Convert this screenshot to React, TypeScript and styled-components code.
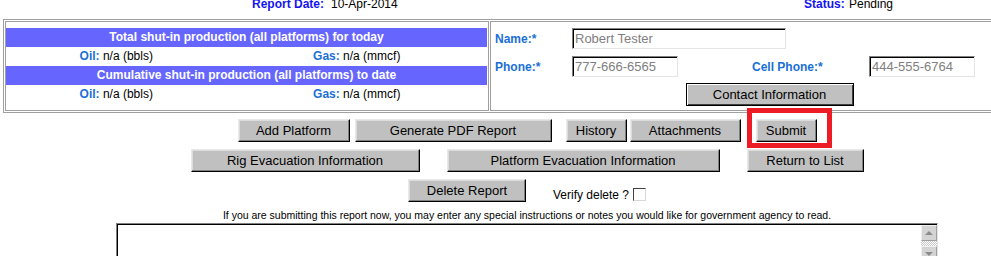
import React from "react";
import styled, { createGlobalStyle } from "styled-components";

const GlobalStyle = createGlobalStyle`
  html, body {
    margin: 0;
    padding: 0;
    background: #fff;
    overflow: hidden;
  }
  body {
    font-family: Arial, "Liberation Sans", sans-serif;
    font-size: 12px;
    color: #000;
  }
`;

const Page = styled.div`
  width: 1054px;
`;

const HeaderRow = styled.div`
  height: 19px;
  padding-left: 252px;
  display: grid;
  grid-template-columns: 79px 473px 45px 1fr;
  line-height: 8px;
  white-space: nowrap;
`;

const HeaderLabel = styled.span`
  font-weight: bold;
  color: #1414f0;
`;

const InfoTable = styled.div`
  margin-left: 3px;
  width: 1048px;
  box-sizing: border-box;
  border: 1px solid #a0a0a0;
  padding: 1px;
  display: flex;
  gap: 1px;
`;

const TotalsCell = styled.div`
  width: 484px;
  box-sizing: border-box;
  border: 1px solid #a0a0a0;
  padding-right: 1px;
  display: flex;
  flex-direction: column;
  justify-content: center;
`;

const ContactCell = styled.div`
  flex: 1;
  box-sizing: border-box;
  border: 1px solid #a0a0a0;
  padding: 6px 4px 4px 4px;
`;

const Bar = styled.div`
  height: 19px;
  line-height: 19px;
  background: #6666ff;
  color: #fff;
  font-weight: bold;
  text-align: center;
`;

const ProdRow = styled.div`
  height: 19px;
  line-height: 19px;
  display: grid;
  grid-template-columns: 1fr 1fr;
`;

const ProdItem = styled.div`
  text-align: center;
  padding-right: 20px;
`;

const FieldLabel = styled.span`
  font-weight: bold;
  color: #1a6fd6;
`;

const FormGrid = styled.div`
  display: grid;
  grid-template-columns: 77px 180px 117px 106px;
  row-gap: 7px;
  align-items: center;
`;

const TextField = styled.input<{ $width: number; $span?: number }>`
  box-sizing: border-box;
  width: ${(p) => p.$width}px;
  height: 21px;
  margin: 0;
  padding: 0 2px;
  font-family: Arial, "Liberation Sans", sans-serif;
  font-size: 13px;
  color: #808080;
  background: #fff;
  border: 1px solid;
  border-color: #808080 #e4e4e4 #e4e4e4 #808080;
  box-shadow: inset 1px 1px #000;
  outline: none;
  ${(p) => (p.$span ? `grid-column: span ${p.$span};` : "")}
`;

const CenterRow = styled.div<{ $top?: number }>`
  display: flex;
  justify-content: center;
  align-items: center;
  margin-top: ${(p) => p.$top ?? 0}px;
`;

const Button = styled.button<{ $width: number; $ml?: number; $default?: boolean }>`
  box-sizing: border-box;
  width: ${(p) => p.$width}px;
  height: 23px;
  margin: 0 0 0 ${(p) => p.$ml ?? 0}px;
  padding: 0;
  font-family: Arial, "Liberation Sans", sans-serif;
  font-size: 13px;
  color: #000;
  background: #c0c0c0;
  border: 1px solid;
  border-color: ${(p) => (p.$default ? "#000" : "#e8e8e8 #000 #000 #e8e8e8")};
  box-shadow: ${(p) =>
    p.$default
      ? "inset 1px 1px #fff, inset -1px -1px #404040"
      : "inset -1px -1px #808080, inset 1px 1px #dcdcdc"};
  cursor: pointer;
`;

const Actions = styled.div`
  margin-top: 6px;
  display: flex;
  flex-direction: column;
  gap: 7px;
`;

const Highlighted = styled.span<{ $ml: number }>`
  position: relative;
  margin-left: ${(p) => p.$ml}px;
  display: inline-flex;
`;

const RedMark = styled.span`
  position: absolute;
  left: -9px;
  top: -11px;
  width: 85px;
  height: 40px;
  box-sizing: border-box;
  border: 5px solid #ed1c24;
  pointer-events: none;
`;

const VerifyText = styled.span<{ $ml: number }>`
  margin-left: ${(p) => p.$ml}px;
  margin-top: 8px;
  display: inline-flex;
  align-items: center;
  gap: 4px;
`;

const CheckBox = styled.span`
  width: 13px;
  height: 13px;
  box-sizing: border-box;
  background: #fff;
  border: 1px solid;
  border-color: #404040 #d8d8d8 #d8d8d8 #404040;
`;

const Note = styled.div`
  margin-top: 6px;
  height: 15px;
  line-height: 14px;
  font-size: 10.5px;
  text-align: center;
  white-space: nowrap;
  color: #000;
`;

const NotesBox = styled.div`
  margin: 0 auto;
  width: 822px;
  height: 40px;
  box-sizing: border-box;
  display: flex;
  border: 1px solid;
  border-color: #808080 #e4e4e4 #e4e4e4 #808080;
  box-shadow: inset 1px 1px #000;
  padding: 1px 0 0 1px;
`;

const NotesArea = styled.textarea`
  flex: 1;
  border: none;
  resize: none;
  outline: none;
  margin: 0;
  padding: 2px;
  font-family: Arial, "Liberation Sans", sans-serif;
  font-size: 13px;
`;

const ScrollBar = styled.div`
  width: 16px;
  display: flex;
  flex-direction: column;
`;

const ScrollTrack = styled.div`
  flex: 1;
  background: repeating-conic-gradient(#c8c8c8 0 25%, #fff 0 50%) 0 0 / 2px 2px;
`;

const ScrollButton = styled.div<{ $down?: boolean }>`
  height: 16px;
  box-sizing: border-box;
  background: #d4d4d4;
  border: 1px solid;
  border-color: #f0f0f0 #a0a0a0 #a0a0a0 #f0f0f0;
  display: flex;
  align-items: center;
  justify-content: center;

  &::after {
    content: "";
    width: 0;
    height: 0;
    border-left: 4px solid transparent;
    border-right: 4px solid transparent;
    ${(p) =>
      p.$down
        ? "border-top: 4px solid #8c8c8c;"
        : "border-bottom: 4px solid #8c8c8c;"}
  }
`;

export default function App(): JSX.Element {
  return (
    <Page>
      <GlobalStyle />
      <HeaderRow>
        <HeaderLabel>Report Date:</HeaderLabel>
        <span>10-Apr-2014</span>
        <HeaderLabel>Status:</HeaderLabel>
        <span>Pending</span>
      </HeaderRow>

      <InfoTable>
        <TotalsCell>
          <Bar>Total shut-in production (all platforms) for today</Bar>
          <ProdRow>
            <ProdItem>
              <FieldLabel>Oil:</FieldLabel> n/a (bbls)
            </ProdItem>
            <ProdItem>
              <FieldLabel>Gas:</FieldLabel> n/a (mmcf)
            </ProdItem>
          </ProdRow>
          <Bar>Cumulative shut-in production (all platforms) to date</Bar>
          <ProdRow>
            <ProdItem>
              <FieldLabel>Oil:</FieldLabel> n/a (bbls)
            </ProdItem>
            <ProdItem>
              <FieldLabel>Gas:</FieldLabel> n/a (mmcf)
            </ProdItem>
          </ProdRow>
        </TotalsCell>

        <ContactCell>
          <FormGrid>
            <FieldLabel>Name:*</FieldLabel>
            <TextField $width={214} $span={3} readOnly value="Robert Tester" />
            <FieldLabel>Phone:*</FieldLabel>
            <TextField $width={106} readOnly value="777-666-6565" />
            <FieldLabel>Cell Phone:*</FieldLabel>
            <TextField $width={106} readOnly value="444-555-6764" />
          </FormGrid>
          <CenterRow $top={6}>
            <Button $width={168} $default>
              Contact Information
            </Button>
          </CenterRow>
        </ContactCell>
      </InfoTable>

      <Actions>
        <CenterRow>
          <Button $width={112}>Add Platform</Button>
          <Button $width={197} $ml={5}>
            Generate PDF Report
          </Button>
          <Button $width={61} $ml={14}>
            History
          </Button>
          <Button $width={111} $ml={3}>
            Attachments
          </Button>
          <Highlighted $ml={15}>
            <Button $width={61}>Submit</Button>
            <RedMark />
          </Highlighted>
        </CenterRow>
        <CenterRow>
          <Button $width={229}>Rig Evacuation Information</Button>
          <Button $width={273} $ml={27}>
            Platform Evacuation Information
          </Button>
          <Button $width={117} $ml={27}>
            Return to List
          </Button>
        </CenterRow>
        <CenterRow>
          <Button $width={118}>Delete Report</Button>
          <VerifyText $ml={27}>
            Verify delete ?
            <CheckBox />
          </VerifyText>
        </CenterRow>
      </Actions>

      <Note>
        If you are submitting this report now, you may enter any special instructions or notes you
        would like for government agency to read.
      </Note>
      <NotesBox>
        <NotesArea />
        <ScrollBar>
          <ScrollButton />
          <ScrollTrack />
          <ScrollButton $down />
        </ScrollBar>
      </NotesBox>
    </Page>
  );
}
